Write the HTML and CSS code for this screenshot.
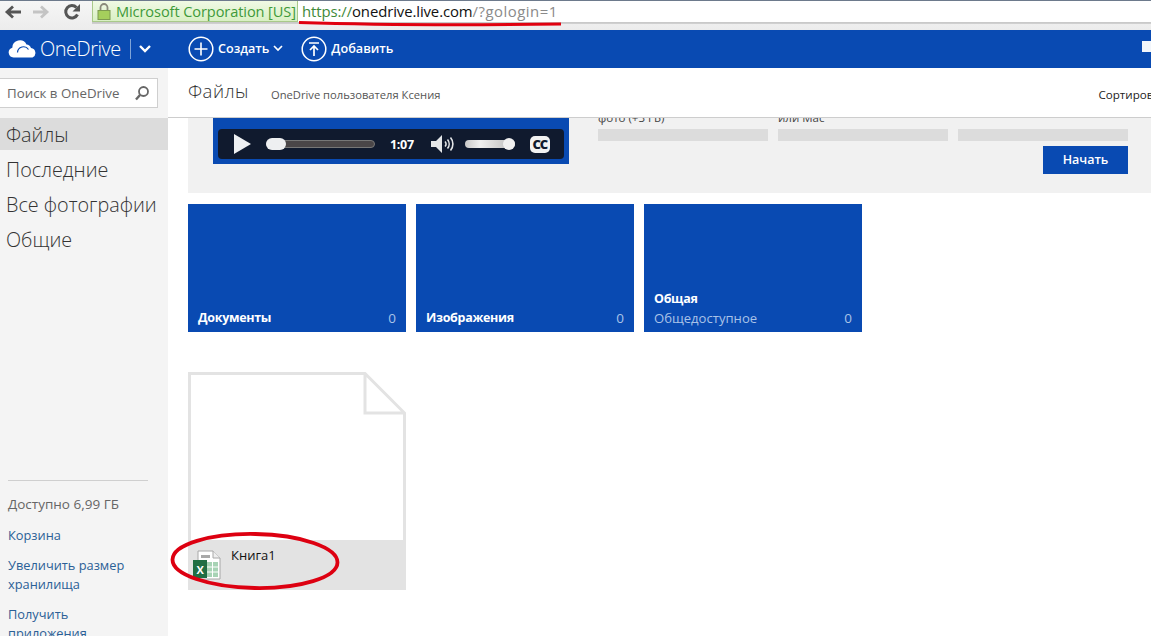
FILE: index.html
```html
<!DOCTYPE html>
<html lang="ru">
<head>
<meta charset="utf-8">
<title>OneDrive</title>
<link rel="stylesheet" href="styles.css">
</head>
<body>
<header class="chrome">
  <div class="nav-icons">
    <svg class="nav-icon" width="18" height="18" viewBox="0 0 18 18"><path d="M17 9H3M9 3.500 3 9l6 5.500" fill="none" stroke="#555" stroke-width="2.800"/></svg>
    <svg class="nav-icon" width="18" height="18" viewBox="0 0 18 18"><path d="M1 9h14M9 3.500 15 9l-6 5.500" fill="none" stroke="#c4c4c4" stroke-width="2.800"/></svg>
    <svg class="nav-icon reload" width="18" height="18" viewBox="0 0 18 18"><path d="M14.500 11.500A6.200 6.200 0 1 1 13.500 4.500" fill="none" stroke="#555" stroke-width="3"/><path d="M17 1v7.500H9.500z" fill="#555"/></svg>
  </div>
  <div class="address">
    <div class="ev">
      <svg width="14" height="17" viewBox="0 0 14 17"><path d="M3.500 8V4.500a3.500 3.500 0 0 1 7 0V8" fill="none" stroke="#8a8a7a" stroke-width="1.800"/><rect x="1" y="7.500" width="12" height="9" fill="#a5cf5c" stroke="#7d9a50"/></svg>
      <span>Microsoft Corporation [US]</span>
    </div>
    <div class="url"><span class="scheme">https://</span><span class="host">onedrive.live.com</span><span class="path">/?gologin=1</span></div>
  </div>
</header>

<nav class="topbar">
  <div class="brand">
    <svg width="29" height="18" viewBox="0 0 29 18"><path d="M5.500 17.500a5 5 0 0 1-1.200-9.800A7.500 7.500 0 0 1 18.500 4.500 5.500 5.500 0 0 1 23 8a5 5 0 0 1 1.500 9.500z" fill="#fff"/><path d="M9.500 12.500A6 6 0 0 1 20.500 9.500" fill="none" stroke="#094ab2" stroke-width="1.200"/></svg>
    <span class="brand-name">OneDrive</span>
    <span class="brand-sep"></span>
    <svg class="brand-caret" width="14" height="10" viewBox="0 0 14 10"><path d="m2 2 5 5 5-5" fill="none" stroke="#fff" stroke-width="2.400"/></svg>
  </div>
  <div class="cmd create">
    <svg width="26" height="26" viewBox="0 0 26 26"><circle cx="13" cy="13" r="11.800" fill="none" stroke="#fff" stroke-width="1.500"/><path d="M13 6.500v13M6.500 13h13" stroke="#fff" stroke-width="1.600"/></svg>
    <span>Создать</span>
    <svg width="10" height="7" viewBox="0 0 10 7"><path d="m1 1 4 4 4-4" fill="none" stroke="#fff" stroke-width="1.700"/></svg>
  </div>
  <div class="cmd">
    <svg width="26" height="26" viewBox="0 0 26 26"><circle cx="13" cy="13" r="11.800" fill="none" stroke="#fff" stroke-width="1.500"/><path d="M8 7h10M13 20v-9.500M9 14l4-4 4 4" fill="none" stroke="#fff" stroke-width="1.700"/></svg>
    <span>Добавить</span>
  </div>
  <div class="mail-icon"></div>
</nav>

<div class="layout">
  <aside class="sidebar">
    <div class="search"><span>Поиск в OneDrive</span>
      <svg width="16" height="16" viewBox="0 0 16 16"><circle cx="9.500" cy="6.500" r="4.500" fill="none" stroke="#666" stroke-width="1.800"/><path d="M6 10l-4 4.500" stroke="#666" stroke-width="2.400"/></svg>
    </div>
    <ul class="side-nav">
      <li class="active">Файлы</li>
      <li>Последние</li>
      <li>Все фотографии</li>
      <li>Общие</li>
    </ul>
    <div class="side-foot">
      <p class="quota">Доступно 6,99 ГБ</p>
      <a>Корзина</a>
      <a>Увеличить размер хранилища</a>
      <a>Получить приложения</a>
    </div>
  </aside>

  <main class="main">
    <div class="page-head">
      <h1>Файлы</h1>
      <span class="owner">OneDrive пользователя Ксения</span>
      <span class="sort">Сортировка</span>
    </div>
    <section class="banner">
      <div class="video">
        <div class="player">
          <svg width="18" height="20" viewBox="0 0 18 20"><path d="M1 0l17 10L1 20z" fill="#eef0f2"/></svg>
          <div class="progress"><div class="knob"></div></div>
          <span class="time">1:07</span>
          <svg width="24" height="18" viewBox="0 0 24 18"><path d="M0 6h5l6-6v18l-6-6H0z" fill="#e4e6e8"/><path d="M14 6.500a3.500 3.500 0 0 1 0 5M16.500 4.500a7 7 0 0 1 0 9M19.500 2.500a10 10 0 0 1 0 13" fill="none" stroke="#e4e6e8" stroke-width="1.600"/></svg>
          <div class="volume"><div class="vol-knob"></div></div>
          <div class="cc">CC</div>
        </div>
      </div>
      <div class="offers">
        <div class="offer-cols">
          <div class="offer"><div class="clip"><span>фото (+3 ГБ)</span></div><div class="bar"></div></div>
          <div class="offer"><div class="clip"><span>или Mac</span></div><div class="bar"></div></div>
          <div class="offer"><div class="clip"></div><div class="bar"></div></div>
        </div>
        <button class="start">Начать</button>
      </div>
    </section>
    <section class="tiles">
      <div class="tile"><div class="tile-row"><b>Документы</b><span>0</span></div></div>
      <div class="tile"><div class="tile-row"><b>Изображения</b><span>0</span></div></div>
      <div class="tile"><b class="tile-title">Общая</b><div class="tile-row sub"><span>Общедоступное</span><span>0</span></div></div>
    </section>
    <section class="file">
      <svg class="page" width="218" height="168" viewBox="0 0 218 168"><path d="M1.500 168V1.500H177L216.500 41V168M177 1.500V41H216.500" fill="#fff" stroke="#e3e3e3" stroke-width="3"/></svg>
      <div class="file-foot">
        <svg class="xl" width="28" height="30" viewBox="0 0 28 30"><path d="M5 1h15l7 7v21H5z" fill="#fff" stroke="#a8a8a8"/><path d="M20 1v7h7" fill="#eee" stroke="#a8a8a8"/><path d="M8 5h9v3H8z" fill="#a9a9a9"/><path d="M14 12h11v15H14z" fill="#a7d3b5"/><path d="M14 17h11M14 22h11M19.500 12v15" stroke="#fff"/><path d="M0 10h14v18H0z" fill="#1f6e43"/><text x="3.500" y="24" class="xl-letter">X</text></svg>
        <span class="file-name">Книга1</span>
      </div>
    </section>
  </main>
</div>

<svg class="mark mark-line" width="264" height="8" viewBox="0 0 264 8"><path d="M1 2.500C80 5 190 5 263 4" fill="none" stroke="#e0000f" stroke-width="3"/></svg>
<svg class="mark mark-ring" width="170" height="60" viewBox="0 0 170 60"><ellipse cx="85" cy="29" rx="82.500" ry="27" fill="none" stroke="#dd0011" stroke-width="3.800" transform="rotate(1 85 29)"/></svg>
</body>
</html>
```
FILE: styles.css
```css
* { box-sizing: border-box; }
html, body { margin: 0; height: 636px; overflow: hidden; }
body { position: relative; background: #fff; font-family: "Open Sans", "Noto Sans", sans-serif; color: #222; display: flex; flex-direction: column; }

.chrome { height: 30px; flex: none; display: flex; align-items: flex-start; background: linear-gradient(#f6f6f6, #ececec); border-top: 1px solid #6d7a8c; }
.nav-icons { width: 92px; height: 22px; display: flex; align-items: center; gap: 10px; padding-left: 4px; flex: none; }
.nav-icon.reload { margin-left: 3px; }
.address { flex: 1; height: 22px; display: flex; background: #fff; border-bottom: 1px solid #c9c9c9; box-shadow: 0 1px 0 #cfcfcf; }
.ev { width: 206px; display: flex; align-items: center; gap: 5px; padding-left: 4px; background: linear-gradient(#f0f9e4, #d9f0c4); border: 1px solid #a9c98a; border-top: 0; color: #3f9a3a; font-size: 14.600px; white-space: nowrap; letter-spacing: -0.100px; }
.url { padding-left: 4px; line-height: 21px; font-size: 14.900px; white-space: nowrap; letter-spacing: -0.100px; }
.scheme { color: #3f8a3a; }
.host { color: #111; }
.path { color: #8a8a8a; letter-spacing: .5px; }

.topbar { height: 38px; flex: none; background: #094ab2; color: #fff; display: flex; align-items: center; font-size: 12.600px; font-weight: 600; padding: 0 0 1px 8px; position: relative; }
.brand { width: 180px; display: flex; align-items: center; flex: none; }
.brand-name { font-size: 20px; font-weight: 300; margin-left: 3px; letter-spacing: -0.500px; }
.brand-sep { width: 1px; height: 20px; background: #7fa4d8; margin: 0 7px 0 9px; }
.cmd { display: flex; align-items: center; gap: 4px; margin-right: 19px; }
.cmd.create { margin-right: 18px; }
.mail-icon { position: absolute; right: 0; top: 11px; width: 9px; height: 11px; background: #f2f6fb; }

.layout { flex: 1; display: flex; min-height: 0; }
.sidebar { width: 168px; flex: none; background: #f4f4f4; display: flex; flex-direction: column; overflow: hidden; }
.sidebar > * { flex: none; }
.search { width: 158px; height: 30px; margin-top: 10px; background: #fff; border: 1px solid #cfcfcf; border-left: 0; display: flex; align-items: center; justify-content: space-between; padding: 0 7px; font-size: 13.300px; color: #666; white-space: nowrap; }
.side-nav { list-style: none; margin: 10px 0 0; padding: 0; font-size: 19.800px; font-weight: 300; color: #333; }
.side-nav li { height: 35px; line-height: 33px; padding-left: 6px; white-space: nowrap; }
.side-nav .active { height: 32px; line-height: 33px; background: #dcdcdc; margin-bottom: 3px; }
.side-foot { margin: 222px 20px 0 8px; border-top: 1px solid #cfcfcf; padding-top: 14px; font-size: 12.800px; line-height: 19px; }
.quota { margin: 0 0 12px; color: #666; white-space: nowrap; font-size: 13.500px; }
.side-foot a { display: block; color: #2b6096; margin-bottom: 11px; }

.main { flex: 1; min-width: 0; overflow: hidden; }
.page-head { height: 50px; display: flex; align-items: center; padding: 3px 0 0 20px; white-space: nowrap; overflow: hidden; border-bottom: 1px solid #cdcdcd; }
.page-head h1 { margin: 0; font-size: 18.500px; font-weight: 300; color: #333; letter-spacing: .5px; position: relative; top: -4px; }
.owner { margin-left: 22px; font-size: 11.200px; color: #555; }
.sort { margin-left: 658px; font-size: 11.600px; color: #222; }

.banner { margin-left: 20px; height: 75px; background: #f1f1f1; display: flex; padding-left: 25px; }
.video { width: 356px; height: 46px; background: #094ab2; padding: 11px 5px 5px; flex: none; }
.player { height: 30px; background: #101a2e; border-radius: 4px; display: flex; align-items: center; padding: 0 14px 0 15px; }
.progress { width: 109px; height: 8px; background: #4a4648; border: 1px solid #777; border-radius: 4px; margin-left: 15px; position: relative; }
.knob { position: absolute; left: -1px; top: -3px; width: 20px; height: 12px; background: #eeeff1; border-radius: 6px; }
.time { color: #fff; font-size: 12.500px; font-weight: 700; margin: 0 17px 0 15px; letter-spacing: -0.300px; }
.volume { width: 50px; height: 8px; margin-left: 10px; background: linear-gradient(90deg, #c8c8c8, #f0f0f0 30%, #b8b8b8); border-radius: 4px; position: relative; }
.vol-knob { position: absolute; right: 0; top: -2px; width: 12px; height: 12px; background: #f0f0f0; border-radius: 50%; }
.cc { margin-left: 15px; width: 20px; height: 17px; background: #f2f2f2; border-radius: 5px; color: #101a2e; font-size: 13px; font-weight: 800; line-height: 17px; text-align: center; letter-spacing: -1px; }

.offers { margin-left: 29px; width: 530px; }
.offer-cols { display: flex; gap: 10px; }
.offer { width: 170px; }
.clip { height: 7px; overflow: hidden; display: flex; flex-direction: column; justify-content: flex-end; font-size: 11.500px; line-height: 14px; color: #444; white-space: nowrap; }
.clip span { flex: none; }
.bar { height: 12px; margin-top: 4px; background: #dcdcdc; }
.start { display: block; margin: 5px 0 0 auto; width: 85px; height: 28px; background: #094ab2; color: #fff; border: 0; padding: 0 0 2px; font: 600 12.500px "Open Sans", sans-serif; }

.tiles { margin: 11px 0 0 20px; display: flex; gap: 10px; }
.tile { width: 218px; height: 128px; background: #094ab2; color: #fff; display: flex; flex-direction: column; justify-content: flex-end; padding: 0 10px 5px; font-size: 12.500px; }
.tile b { font-weight: 700; letter-spacing: -0.300px; }
.tile-row { display: flex; justify-content: space-between; line-height: 18px; }
.tile-row > span { color: #a9c3e8; font-size: 13.500px; }
.tile-title { line-height: 18px; margin-bottom: 1px; }
.tile-row.sub > span:first-child { font-size: 13.100px; }

.file { margin: 40px 0 0 20px; width: 218px; height: 218px; display: flex; flex-direction: column; }
.page { display: block; flex: none; }
.file-foot { height: 50px; background: #e3e3e3; position: relative; }
.xl { position: absolute; left: 5px; top: 10px; }
.xl-letter { fill: #fff; font: 700 11px "Open Sans", sans-serif; }
.file-name { position: absolute; left: 43px; top: 6px; font-size: 13px; color: #111; }

.mark { position: absolute; }
.mark-line { left: 298px; top: 20px; }
.mark-ring { left: 170px; top: 532px; }
```
